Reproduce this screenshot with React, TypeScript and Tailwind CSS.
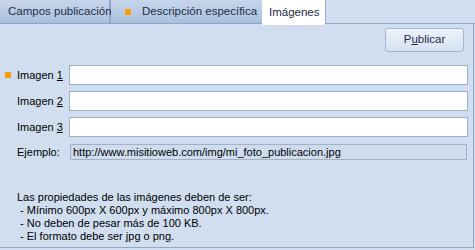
import React from "react";

const Dot = () => <span className="inline-block w-[6px] h-[6px] bg-[#ff9c00]" />;

const rows = ["1", "2", "3"];

export default function App() {
  return (
    <div
      className="w-[475px] h-[250px] bg-[#d1deef] text-[11px] text-black overflow-hidden"
      style={{ fontFamily: '"Liberation Sans", Arial, sans-serif' }}
    >
      {/* Tabs */}
      <div className="flex h-[24px] border-b border-[#8ea6c9]">
        <div className="w-[111px] flex items-center pl-[8px] whitespace-nowrap text-[11.5px] text-[#1e2b47] bg-gradient-to-b from-[#c6d6eb] to-[#a9c0dd] border-r-2 border-[#8fa7ca]">
          Campos publicación
        </div>
        <div className="w-[151px] flex items-center pl-[14px] gap-[11px] whitespace-nowrap text-[11.5px] text-[#1e2b47] bg-gradient-to-b from-[#c6d6eb] to-[#a9c0dd]">
          <Dot />
          <span>Descripción específica</span>
        </div>
        <div className="w-[64px] h-[25px] flex items-center pl-[7px] whitespace-nowrap text-[11.5px] text-[#1e2b47] bg-white border-r border-[#9aaecb] -mb-px">
          Imágenes
        </div>
        <div className="flex-1" />
      </div>

      {/* Panel */}
      <div className="w-[474px] h-[224px] border-r border-b border-[#8ea6c9] flex flex-col">
        <div className="flex justify-end pt-[4px] pr-[9px]">
          <button className="w-[79px] h-[24px] rounded-[3px] border border-[#a3b4cc] bg-gradient-to-b from-[#edf2fa] to-[#d6e1f0] text-[11.5px] text-[#1e2b47]">
            P<span className="underline">u</span>blicar
          </button>
        </div>

        <div className="flex flex-col gap-[6px] mt-[13px]">
          {rows.map((n) => (
            <div key={n} className="flex items-center h-[20px]">
              <div className="w-[69px] flex items-center">
                <div className="w-[17px] pl-[5px] flex items-center">
                  {n === "1" && <Dot />}
                </div>
                <span>
                  Imagen <span className="underline">{n}</span>
                </span>
              </div>
              <div className="w-[399px] h-[20px] bg-white border border-[#9cb0cf]" />
            </div>
          ))}
          <div className="flex items-center h-[16px] mt-[1px]">
            <div className="w-[70px] pl-[17px]">Ejemplo:</div>
            <div className="w-[397px] h-[16px] border border-[#a0b1c8] bg-[#cfdcee] flex items-center pl-[2px] leading-none">
              http://www.misitioweb.com/img/mi_foto_publicacion.jpg
            </div>
          </div>
        </div>

        <div className="mt-[31px] pl-[17px] leading-[13px]">
          <div>Las propiedades de las imágenes deben de ser:</div>
          <div>&nbsp;- Mínimo 600px X 600px y máximo 800px X 800px.</div>
          <div>&nbsp;- No deben de pesar más de 100 KB.</div>
          <div>&nbsp;- El formato debe ser jpg o png.</div>
        </div>
      </div>
    </div>
  );
}
